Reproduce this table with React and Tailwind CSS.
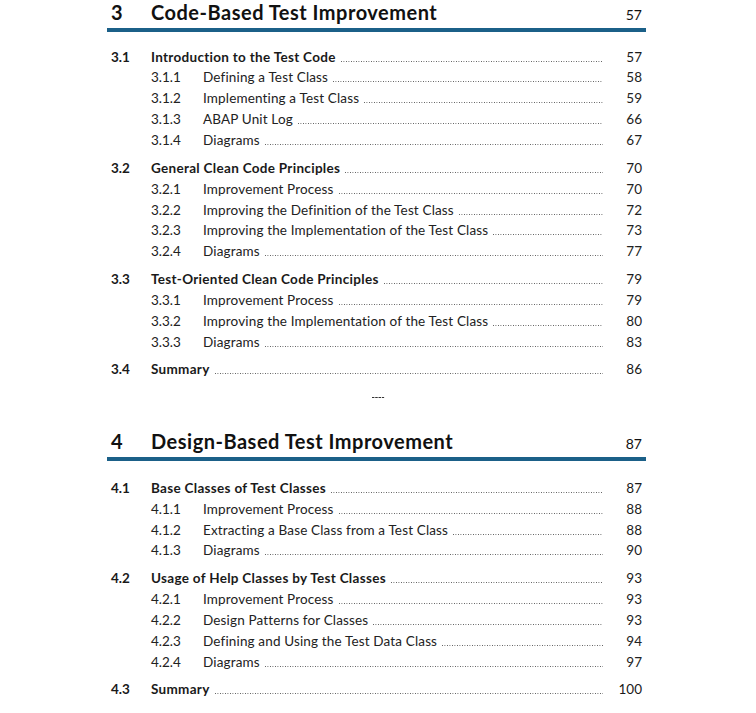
const chapters = [
  {
    num: '3',
    title: 'Code-Based Test Improvement',
    page: '57',
    sections: [
      {
        num: '3.1',
        title: 'Introduction to the Test Code',
        page: '57',
        items: [
          ['3.1.1', 'Defining a Test Class', '58'],
          ['3.1.2', 'Implementing a Test Class', '59'],
          ['3.1.3', 'ABAP Unit Log', '66'],
          ['3.1.4', 'Diagrams', '67'],
        ],
      },
      {
        num: '3.2',
        title: 'General Clean Code Principles',
        page: '70',
        items: [
          ['3.2.1', 'Improvement Process', '70'],
          ['3.2.2', 'Improving the Definition of the Test Class', '72'],
          ['3.2.3', 'Improving the Implementation of the Test Class', '73'],
          ['3.2.4', 'Diagrams', '77'],
        ],
      },
      {
        num: '3.3',
        title: 'Test-Oriented Clean Code Principles',
        page: '79',
        items: [
          ['3.3.1', 'Improvement Process', '79'],
          ['3.3.2', 'Improving the Implementation of the Test Class', '80'],
          ['3.3.3', 'Diagrams', '83'],
        ],
      },
      { num: '3.4', title: 'Summary', page: '86', items: [] },
    ],
  },
  {
    num: '4',
    title: 'Design-Based Test Improvement',
    page: '87',
    sections: [
      {
        num: '4.1',
        title: 'Base Classes of Test Classes',
        page: '87',
        items: [
          ['4.1.1', 'Improvement Process', '88'],
          ['4.1.2', 'Extracting a Base Class from a Test Class', '88'],
          ['4.1.3', 'Diagrams', '90'],
        ],
      },
      {
        num: '4.2',
        title: 'Usage of Help Classes by Test Classes',
        page: '93',
        items: [
          ['4.2.1', 'Improvement Process', '93'],
          ['4.2.2', 'Design Patterns for Classes', '93'],
          ['4.2.3', 'Defining and Using the Test Data Class', '94'],
          ['4.2.4', 'Diagrams', '97'],
        ],
      },
      { num: '4.3', title: 'Summary', page: '100', items: [] },
    ],
  },
];

function Leader() {
  return (
    <span className="flex-1 ml-[5px] h-[1px] bg-[linear-gradient(90deg,#555_1px,transparent_1px)] bg-[length:2.5px_1px] bg-repeat-x" />
  );
}

function SectionRow({ num, title, page }) {
  return (
    <div className="flex items-baseline h-[20.9px] leading-[20.9px] font-bold text-[#1a1a1a]">
      <span className="w-[40px] shrink-0">{num}</span>
      <span className="whitespace-nowrap tracking-[0.3px]">{title}</span>
      <Leader />
      <span className="w-[39px] shrink-0 text-right font-normal">{page}</span>
    </div>
  );
}

function ItemRow({ num, title, page }) {
  return (
    <div className="flex items-baseline h-[20.9px] leading-[20.9px] text-[#222]">
      <span className="w-[40px] shrink-0" />
      <span className="w-[52px] shrink-0">{num}</span>
      <span className="whitespace-nowrap tracking-[0.15px]">{title}</span>
      <Leader />
      <span className="w-[39px] shrink-0 text-right">{page}</span>
    </div>
  );
}

function Chapter({ chapter, listClass }) {
  return (
    <div>
      <div className="flex items-baseline px-[4px] leading-[24px] text-[#111]">
        <span className="w-[40px] shrink-0 text-[20px] font-bold">{chapter.num}</span>
        <span className="flex-1 text-[20px] font-bold tracking-[0.5px]">{chapter.title}</span>
        <span className="text-[14px]">{chapter.page}</span>
      </div>
      <div className="h-[4px] mt-[1px] bg-[#1b6088]" />
      <div className={`${listClass} px-[4px] text-[13.5px]`}>
        {chapter.sections.map((s) => (
          <div key={s.num} className="mt-[6.8px] first:mt-0">
            <SectionRow num={s.num} title={s.title} page={s.page} />
            {s.items.map(([n, t, p]) => (
              <ItemRow key={n} num={n} title={t} page={p} />
            ))}
          </div>
        ))}
      </div>
    </div>
  );
}

export default function App() {
  return (
    <div className="w-[756px] h-[713px] overflow-hidden bg-white pl-[107px] pr-[110px] font-['Lato',sans-serif]">
      <Chapter chapter={chapters[0]} listClass="mt-[14.5px]" />
      <div className="h-[48.5px] flex justify-center">
        <span className="ml-[3px] mt-[16.5px] w-[13px] h-[1px] bg-[linear-gradient(90deg,#333_2.5px,transparent_2.5px)] bg-[length:3.25px_1px] bg-repeat-x" />
      </div>
      <Chapter chapter={chapters[1]} listClass="mt-[17px]" />
    </div>
  );
}
